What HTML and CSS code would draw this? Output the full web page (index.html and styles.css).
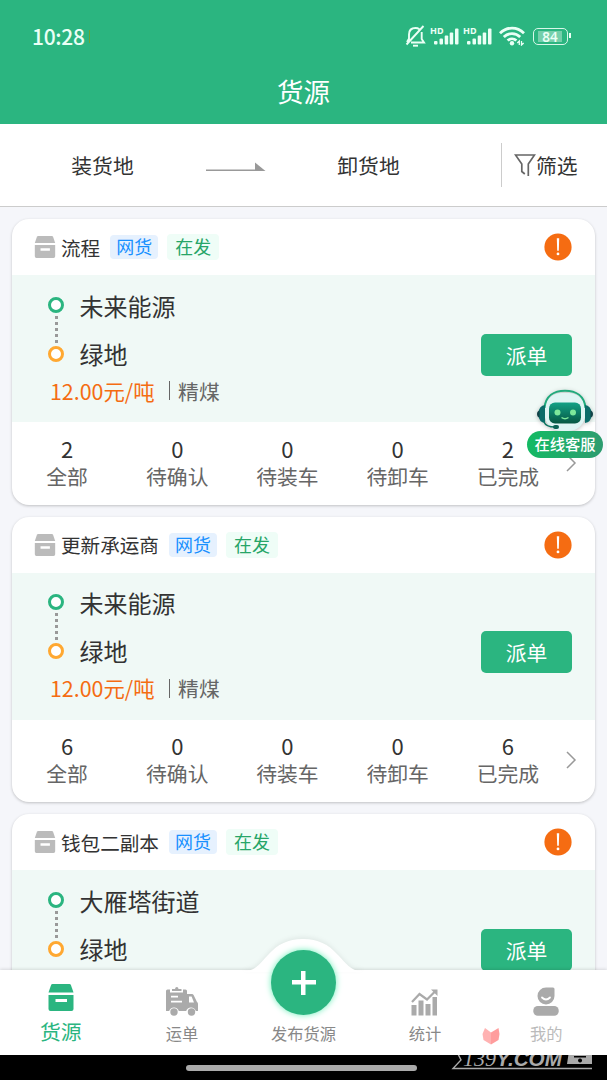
FILE: index.html
```html
<!DOCTYPE html>
<html lang="zh-CN">
<head>
  <meta charset="UTF-8">
  <meta name="viewport" content="width=device-width, initial-scale=1.0">
  <title>货源</title>
  <link rel="stylesheet" href="styles.css">
</head>
<body>
  <!-- Shared icons -->
  <svg class="sprite" width="0" height="0">
    <symbol id="icon-box" viewBox="0 0 26 27">
      <path d="M4.500 0h17a1.500 1.500 0 0 1 1.400 1L25.500 8.500H.5L3.100 1A1.500 1.500 0 0 1 4.500 0z"/>
      <path fill-rule="evenodd" d="M.5 11h25v14a2 2 0 0 1-2 2h-21a2 2 0 0 1-2-2zM7.500 15v3h11.500v-3z"/>
    </symbol>
    <symbol id="icon-arrow" viewBox="0 0 12 18">
      <path d="M2 1l8 8-8 8" fill="none" stroke="#999" stroke-width="1.500"/>
    </symbol>
    <symbol id="icon-bars" viewBox="0 0 28 18">
      <rect x="3" y="14" width="3.500" height="3.500" rx="1"/>
      <rect x="8.500" y="11.500" width="3.500" height="6" rx="1"/>
      <rect x="13.700" y="8.500" width="3.500" height="9" rx="1"/>
      <rect x="18.700" y="5.500" width="3.500" height="12" rx="1"/>
      <rect x="24" y="1.500" width="3.500" height="16" rx="1"/>
    </symbol>
    <symbol id="icon-alert" viewBox="0 0 28 28">
      <circle cx="14" cy="14" r="13.600" fill="#f56c12"/>
      <path d="M12.800 5.200h2.400l-.4 12.500h-1.600z" fill="#fff"/>
      <circle cx="14" cy="20.900" r="1.400" fill="#fff"/>
    </symbol>
  </svg>

  <!-- Header -->
  <header class="header">
    <div class="status-bar">
      <div class="time">10:28<i></i></div>
      <div class="status-icons">
        <svg width="21" height="22" viewBox="0 0 21 22" fill="none" stroke="currentColor" stroke-width="1.900">
          <path d="M4 15V9.500C4 5.500 6.500 3 10.500 3c1.500 0 2.800.4 3.800 1.200M16.700 7v7l2.300 3.500H6M3.800 14L2 17M18.500 1L1.500 19.500"/>
          <path d="M8 20.700h5"/>
        </svg>
        <div class="signal"><span>HD</span><svg width="28" height="18"><use href="#icon-bars"/></svg></div>
        <div class="signal"><span>HD</span><svg width="28" height="18"><use href="#icon-bars"/></svg></div>
        <svg class="wifi" width="26" height="20" viewBox="0 0 26 20" fill="none" stroke="currentColor" stroke-width="2.800">
          <path d="M1 7.200C8 .4 18 .4 25 7.200M4.800 11c4.500-4.500 11.900-4.500 16.400 0M8.600 14.600c2.500-2.400 6.300-2.400 8.800 0"/>
          <circle cx="13" cy="17.200" r="2.200" fill="currentColor" stroke="none"/>
          <path d="M20.300 19v-4l-2 2M22.500 15v4l2.200-2" stroke-width="1.300"/>
        </svg>
        <div class="battery"><span>84</span></div>
      </div>
    </div>
    <h1 class="header-title">货源</h1>
  </header>

  <!-- Filter -->
  <div class="filter-bar">
    <div class="place">装货地</div>
    <svg class="route-arrow" width="60" height="10" viewBox="0 0 60 10">
      <path d="M0 8.200h50" stroke="#999" stroke-width="1.600"/>
      <path d="M49 .5L59.500 9H49z" fill="#999"/>
    </svg>
    <div class="place">卸货地</div>
    <div class="filter">
      <svg width="22" height="24" viewBox="0 0 22 24" fill="none" stroke="#666" stroke-width="1.700">
        <path d="M14.300 23V11L20.500 2H1.500l6.300 9v7.500l3 2.500"/>
      </svg>
      <span>筛选</span>
    </div>
  </div>

  <!-- Cargo list -->
  <main class="list">
    <section class="card">
      <div class="card-head">
        <svg class="box" width="22" height="22"><use href="#icon-box"/></svg>
        <span class="name">流程</span>
        <span class="tag tag-blue">网货</span>
        <span class="tag tag-green">在发</span>
        <svg class="alert" width="28" height="28"><use href="#icon-alert"/></svg>
      </div>
      <div class="card-body">
        <div class="route">
          <div class="stop start">未来能源</div>
          <div class="dots"></div>
          <div class="stop end">绿地</div>
          <div class="price"><b>12.00元/吨</b><i></i>精煤</div>
        </div>
        <button class="dispatch">派单</button>
      </div>
      <div class="stats">
        <div class="stat"><b>2</b><span>全部</span></div>
        <div class="stat"><b>0</b><span>待确认</span></div>
        <div class="stat"><b>0</b><span>待装车</span></div>
        <div class="stat"><b>0</b><span>待卸车</span></div>
        <div class="stat"><b>2</b><span>已完成</span></div>
        <svg class="more" width="12" height="18"><use href="#icon-arrow"/></svg>
      </div>
    </section>

    <section class="card">
      <div class="card-head">
        <svg class="box" width="22" height="22"><use href="#icon-box"/></svg>
        <span class="name">更新承运商</span>
        <span class="tag tag-blue">网货</span>
        <span class="tag tag-green">在发</span>
        <svg class="alert" width="28" height="28"><use href="#icon-alert"/></svg>
      </div>
      <div class="card-body">
        <div class="route">
          <div class="stop start">未来能源</div>
          <div class="dots"></div>
          <div class="stop end">绿地</div>
          <div class="price"><b>12.00元/吨</b><i></i>精煤</div>
        </div>
        <button class="dispatch">派单</button>
      </div>
      <div class="stats">
        <div class="stat"><b>6</b><span>全部</span></div>
        <div class="stat"><b>0</b><span>待确认</span></div>
        <div class="stat"><b>0</b><span>待装车</span></div>
        <div class="stat"><b>0</b><span>待卸车</span></div>
        <div class="stat"><b>6</b><span>已完成</span></div>
        <svg class="more" width="12" height="18"><use href="#icon-arrow"/></svg>
      </div>
    </section>

    <section class="card">
      <div class="card-head">
        <svg class="box" width="22" height="22"><use href="#icon-box"/></svg>
        <span class="name">钱包二副本</span>
        <span class="tag tag-blue">网货</span>
        <span class="tag tag-green">在发</span>
        <svg class="alert" width="28" height="28"><use href="#icon-alert"/></svg>
      </div>
      <div class="card-body">
        <div class="route">
          <div class="stop start">大雁塔街道</div>
          <div class="dots"></div>
          <div class="stop end">绿地</div>
        </div>
        <button class="dispatch">派单</button>
      </div>
    </section>
  </main>

  <!-- Bottom navigation -->
  <nav class="nav">
    <svg class="nav-bump" width="150" height="34" viewBox="0 0 150 34">
      <path d="M16 33c12 0 16-8 24-16 10-11 20-16 35-16s25 5 35 16c8 8 12 16 24 16v1H16z" fill="#fff"/>
    </svg>
    <a class="nav-item active">
      <svg width="26" height="27"><use href="#icon-box"/></svg>
      <span>货源</span>
    </a>
    <a class="nav-item">
      <svg width="32" height="29" viewBox="0 0 32 29">
        <path fill-rule="evenodd" d="M0 4q0-1.500 1.500-1.500H4V5.500h13V2.500h2.500Q21 2.500 21 4v3h5q1 0 1.600 1l3.400 7q1 .5 1 2v7h-2.200a5 5 0 0 0-9.600 0h-7.400a5 5 0 0 0-9.600 0H0zM5 8.700v1.800h7V8.700zM5 13.700v1.800h11v-1.800zM23 9.500v6h5l-2.400-6z"/>
        <path d="M6 4V2h3q.2-2 1.800-2T12.500 2h3v2z"/>
        <circle cx="8" cy="25" r="3.700"/><circle cx="25.500" cy="25" r="3.700"/>
      </svg>
      <span>运单</span>
    </a>
    <a class="nav-item publish">
      <div class="plus"></div>
      <span>发布货源</span>
    </a>
    <a class="nav-item">
      <svg width="27" height="27" viewBox="0 0 27 27">
        <path d="M.5 16h5v10.500h-5zM7.500 11.500h5v15h-5zM14.500 15h5v11.500h-5zM21.500 8h4.500v18.500h-4.500z"/>
        <path d="M1 13l7.500-8 7.500 5.500L24 2.500" fill="none" stroke="#aaa" stroke-width="2.200"/>
        <path d="M20 .5h6.500V7z"/>
      </svg>
      <span>统计</span>
    </a>
    <a class="nav-item mine">
      <svg width="26" height="29" viewBox="0 0 26 29">
        <path d="M4.500 9a8.500 8.500 0 0 1 8.500-8.500h7Q21.500.5 21.500 2v7a8.500 8.500 0 0 1-17 0z"/>
        <path d="M9 10.500q4 4 8 0" fill="none" stroke="#fff" stroke-width="1.800" stroke-linecap="round"/>
        <rect x=".3" y="19" width="25.400" height="9.800" rx="4.500"/>
      </svg>
      <span>我的</span>
    </a>
  </nav>
  <div class="home-bar"><div class="handle"></div></div>

  <!-- Online service -->
  <div class="service">
    <svg width="58" height="44" viewBox="0 0 58 44">
      <defs>
        <linearGradient id="face" x1="0" y1="0" x2="0" y2="1">
          <stop offset="0" stop-color="#12a186"/>
          <stop offset="1" stop-color="#075743"/>
        </linearGradient>
      </defs>
      <rect x="8.500" y="4" width="41" height="38" rx="17" fill="#dff5f4"/>
      <path d="M8.500 19C9.500 7 18 1.700 29 1.700S48.500 7 49.500 19" fill="none" stroke="#20aa7c" stroke-width="2"/>
      <path d="M9 16v18q-6-.5-7-9 1-8.500 7-9zM49 16v18q6-.5 7-9-1-8.500-7-9z" fill="#0b6c69"/>
      <path d="M3.500 21.500v7Q1 28 1 25t2.500-3.500zM54.500 21.500v7q2.500-.5 2.500-3.500t-2.500-3.500z" fill="#124247"/>
      <rect x="13" y="13.500" width="32" height="21" rx="6" fill="url(#face)"/>
      <circle cx="21.500" cy="23.500" r="3" fill="#7de89b"/>
      <circle cx="37" cy="23.500" r="3" fill="#7de89b"/>
      <path d="M25.500 28.500q3.500 2.500 7 0" fill="none" stroke="#7de89b" stroke-width="1.500"/>
      <path d="M8 33q2 5 11 5" fill="none" stroke="#0b7460" stroke-width="1.500"/>
      <rect x="17" y="36" width="6" height="4" rx="2" fill="#0b6355"/>
    </svg>
    <div class="service-label">在线客服</div>
  </div>

  <!-- Watermark -->
  <svg class="fox" width="18" height="17" viewBox="0 0 18 17">
    <path d="M3 0l6 4.500v12L1.500 12 .5 6z" fill="#ffb2b2"/>
    <path d="M16.500 0L9 4.500v12l7.500-4.500 1-6z" fill="#ff9d9d"/>
  </svg>
  <svg class="watermark" width="146" height="26" viewBox="0 0 146 26">
    <path d="M17 6H7l4 8-8 8.500h139" fill="none" stroke="#aaa" stroke-width="1.400"/>
    <text x="13" y="20" class="mark-serif" textLength="33" lengthAdjust="spacingAndGlyphs">139</text>
    <text x="46" y="20" class="mark-sans" textLength="66" lengthAdjust="spacingAndGlyphs">Y.COM</text>
    <path fill-rule="evenodd" d="M119 5h23v13h-25zM124 10v1.500h12V10zM130 12.500a2 2 0 1 0 .1 0z" fill="#aaa"/>
  </svg>
</body>
</html>
```
FILE: styles.css
```css
/* Global Styles */
*,
*::before,
*::after {
  box-sizing: border-box;
}

body {
  margin: 0;
  height: 1080px;
  display: flex;
  flex-direction: column;
  position: relative;
  overflow: hidden;
  background: #f5f6fa;
  color: #333;
  font-family: "Noto Sans CJK SC", sans-serif;
}

b, i, h1 {
  font-weight: normal;
  font-style: normal;
}

svg {
  display: block;
  flex-shrink: 0;
}

.sprite {
  position: absolute;
}

/* Header */
.header {
  height: 124px;
  background: #2bb580;
  color: #fff;
  flex-shrink: 0;
}

.status-bar {
  height: 72px;
  padding: 0 36px 0 32px;
  display: flex;
  justify-content: space-between;
  align-items: center;
  color: #eafff5;
}

.time {
  display: flex;
  align-items: center;
  font-size: 21px;
  font-weight: 500;
  letter-spacing: -0.3px;
}

.time i {
  width: 1px;
  height: 13px;
  margin-left: 4px;
  background: #64a537;
}

.status-icons {
  display: flex;
  align-items: center;
}

.signal {
  position: relative;
  margin-left: 5px;
  fill: currentColor;
}

.signal span {
  position: absolute;
  left: -1px;
  top: -1px;
  font: bold 9px/10px "Noto Sans", sans-serif;
}

.wifi {
  margin-left: 7px;
}

.battery {
  position: relative;
  width: 35px;
  height: 17px;
  margin: 0 3px 0 8px;
  padding: 2px;
  border: 1.5px solid #d8f7e9;
  border-radius: 5px;
}

.battery span {
  display: block;
  width: 24px;
  height: 11px;
  margin-left: 2px;
  background: #75cfab;
  font: 600 13.5px/12px "Noto Sans", sans-serif;
  text-align: center;
}

.battery::after {
  content: "";
  position: absolute;
  right: -4px;
  top: 4px;
  width: 2px;
  height: 5px;
  background: #eafff5;
}

.header-title {
  margin: 0;
  font-size: 26.5px;
  line-height: 37px;
  text-align: center;
}

/* Filter */
.filter-bar {
  height: 83px;
  flex-shrink: 0;
  display: flex;
  align-items: center;
  background: #fff;
  border-bottom: 1.5px solid #ccc;
  font-size: 20.8px;
}

.place {
  width: 205px;
  text-align: center;
}

.route-arrow {
  margin: 3px 0 0 1px;
}

.place + .filter {
  margin-left: 30px;
}

.filter {
  height: 44px;
  padding-left: 12px;
  display: flex;
  align-items: center;
  border-left: 1px solid #ccc;
}

/* Cards */
.list {
  flex: 1;
  overflow: hidden;
  padding: 12.3px 12px 0;
}

.card {
  height: 285.6px;
  margin-bottom: 12px;
  overflow: hidden;
  background: #fff;
  border-radius: 17px;
  box-shadow: 0 1px 3px rgba(0, 0, 0, 0.22);
}

.card-head {
  height: 55.8px;
  padding: 0 23px 0 22px;
  display: flex;
  align-items: center;
}

.box {
  fill: #bbb;
}

.name {
  margin: 0 10px 0 5px;
  font-size: 19.6px;
}

.tag {
  padding: 0 6px;
  height: 24px;
  border-radius: 4px;
  font-size: 18px;
  line-height: 23px;
}

.tag-blue {
  color: #1890ff;
  background: #e6f1fe;
}

.tag-green {
  margin-left: 9px;
  padding: 0 8px;
  height: 26px;
  line-height: 25px;
  color: #27a568;
  background: #effdf7;
}

.alert {
  margin-left: auto;
}

.card-body {
  height: 147px;
  padding: 12.5px 23px 0 38px;
  display: flex;
  justify-content: space-between;
  background: #f0f9f6;
}

.stop {
  height: 36px;
  display: flex;
  align-items: center;
  font-size: 24px;
  line-height: 36px;
}

.stop::before {
  content: "";
  width: 16px;
  height: 16px;
  margin: 0 15.500px 2px -2px;
  border: 3.5px solid #2bb580;
  border-radius: 50%;
  background: #fff;
}

.stop.end::before {
  margin-bottom: 0;
  border-color: #ffa831;
}

.dots {
  height: 27px;
  width: 3px;
  margin: -8px 0 -7px 4.5px;
  background: repeating-linear-gradient(#999 0 3px, transparent 3px 6px);
}

.price {
  display: flex;
  align-items: center;
  margin-top: 4px;
  font-size: 20.8px;
  line-height: 30px;
  color: #666;
}

.price b {
  font-size: 21.4px;
  color: #f56c12;
}

.price i {
  width: 1.5px;
  height: 19px;
  margin: 0 8px 0 14px;
  background: #666;
}

.dispatch {
  width: 91px;
  height: 42px;
  margin-top: 46px;
  padding: 0;
  border: none;
  border-radius: 5px;
  background: #2bb580;
  color: #fff;
  font: 20.8px/40px "Noto Sans CJK SC", sans-serif;
}

.stats {
  height: 82.8px;
  display: flex;
  padding-top: 11.5px;
}

.stat {
  width: 110.2px;
  display: flex;
  flex-direction: column;
  text-align: center;
}

.stat b {
  font-size: 22px;
  line-height: 28px;
}

.stat span {
  font-size: 20.8px;
  line-height: 28px;
  color: #666;
}

.more {
  margin: 20px 0 0 2px;
}

/* Bottom Navigation */
.nav {
  position: relative;
  height: 85px;
  flex-shrink: 0;
  display: flex;
  background: #fff;
  box-shadow: 0 -1px 3px rgba(0, 0, 0, 0.12);
}

.nav-bump {
  position: absolute;
  left: 228px;
  top: -32px;
  filter: drop-shadow(0 -2px 2px rgba(0, 0, 0, 0.06));
}

.nav-item {
  position: relative;
  flex: 1;
  height: 75px;
  display: flex;
  flex-direction: column;
  align-items: center;
  justify-content: flex-end;
  color: #888;
  fill: #aaa;
  font-size: 16.3px;
  line-height: 24px;
}

.nav-item span {
  margin-top: 5px;
}

.nav-item.active {
  height: 76px;
  color: #2bb580;
  fill: #2bb580;
  font-size: 20.8px;
  line-height: 30px;
}

.mine span {
  color: #bbb;
}

.plus {
  width: 65px;
  height: 65px;
  flex-shrink: 0;
  margin-bottom: 1px;
  border-radius: 50%;
  background:
    linear-gradient(#fff, #fff) center / 24px 4.5px no-repeat,
    linear-gradient(#fff, #fff) center / 4.5px 24px no-repeat,
    #2bb580;
  box-shadow: 0 0 6px #6ceeb9;
}

.home-bar {
  height: 25px;
  flex-shrink: 0;
  background: #000;
  padding: 10px 0 0 186px;
}

.handle {
  width: 231px;
  height: 6px;
  border-radius: 3px;
  background: #aaa;
}

/* Online Service */
.service {
  position: absolute;
  left: 527px;
  top: 389px;
  width: 76px;
  display: flex;
  flex-direction: column;
  align-items: center;
}

.service svg {
  filter: drop-shadow(0 1px 2px rgba(0, 0, 0, 0.25));
}

.service-label {
  position: relative;
  width: 76px;
  height: 27px;
  margin-top: -2px;
  border-radius: 14px;
  background: linear-gradient(100deg, #13bb63, #2e9b70);
  color: #fff;
  font-size: 15.3px;
  font-weight: 500;
  line-height: 25px;
  text-align: center;
}

/* Watermark */
.fox {
  position: absolute;
  left: 482px;
  top: 1028px;
}

.watermark {
  position: absolute;
  left: 450px;
  top: 1046px;
  clip-path: inset(9px 0 0 0);
}

.mark-serif {
  font: italic 22px "Liberation Serif", serif;
  fill: #aaa;
}

.mark-sans {
  font: italic bold 20px "Liberation Sans", sans-serif;
  fill: #aaa;
}
```
